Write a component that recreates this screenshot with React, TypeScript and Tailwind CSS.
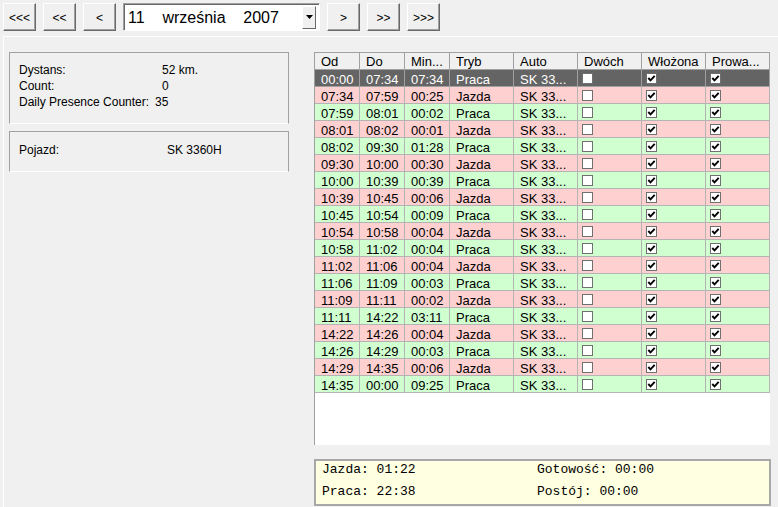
import React from "react";

type Row = { od: string; doo: string; min: string; tryb: string };

const rows: Row[] = [
  { od: "00:00", doo: "07:34", min: "07:34", tryb: "Praca" },
  { od: "07:34", doo: "07:59", min: "00:25", tryb: "Jazda" },
  { od: "07:59", doo: "08:01", min: "00:02", tryb: "Praca" },
  { od: "08:01", doo: "08:02", min: "00:01", tryb: "Jazda" },
  { od: "08:02", doo: "09:30", min: "01:28", tryb: "Praca" },
  { od: "09:30", doo: "10:00", min: "00:30", tryb: "Jazda" },
  { od: "10:00", doo: "10:39", min: "00:39", tryb: "Praca" },
  { od: "10:39", doo: "10:45", min: "00:06", tryb: "Jazda" },
  { od: "10:45", doo: "10:54", min: "00:09", tryb: "Praca" },
  { od: "10:54", doo: "10:58", min: "00:04", tryb: "Jazda" },
  { od: "10:58", doo: "11:02", min: "00:04", tryb: "Praca" },
  { od: "11:02", doo: "11:06", min: "00:04", tryb: "Jazda" },
  { od: "11:06", doo: "11:09", min: "00:03", tryb: "Praca" },
  { od: "11:09", doo: "11:11", min: "00:02", tryb: "Jazda" },
  { od: "11:11", doo: "14:22", min: "03:11", tryb: "Praca" },
  { od: "14:22", doo: "14:26", min: "00:04", tryb: "Jazda" },
  { od: "14:26", doo: "14:29", min: "00:03", tryb: "Praca" },
  { od: "14:29", doo: "14:35", min: "00:06", tryb: "Jazda" },
  { od: "14:35", doo: "00:00", min: "09:25", tryb: "Praca" },
];

function NavButton({ label }: { label: string }) {
  return (
    <button className="w-[33px] h-[28px] pt-[1px] bg-[#f0f0f0] border-t border-l border-white border-b border-r border-b-[#696969] border-r-[#696969] shadow-[inset_-1px_-1px_0_#a0a0a0] text-[12px] text-black flex items-center justify-center">
      {label}
    </button>
  );
}

function CheckBox({ checked }: { checked: boolean }) {
  return (
    <div className="w-[11px] h-[11px] bg-white border border-[#707070] flex items-center justify-center">
      {checked && (
        <svg width="9" height="9" viewBox="0 0 9 9">
          <polyline points="1.3,4 3.5,6.3 7.7,1.8" fill="none" stroke="#000" strokeWidth="1.9" />
        </svg>
      )}
    </div>
  );
}

const headers = [
  { t: "Od", w: "w-[45px]" },
  { t: "Do", w: "w-[45px]" },
  { t: "Min...", w: "w-[45px]" },
  { t: "Tryb", w: "w-[64px]" },
  { t: "Auto", w: "w-[64px]" },
  { t: "Dwóch", w: "w-[64px]" },
  { t: "Włożona", w: "w-[64px]" },
  { t: "Prowa...", w: "w-[64px]" },
];

export default function App() {
  return (
    <div className="w-[778px] h-[507px] bg-[#f0f0f0] overflow-hidden text-black font-['Liberation_Sans',Arial,sans-serif]">
      {/* toolbar */}
      <div className="flex gap-[7px] pt-[3px] pl-[3px] h-[31px]">
        <NavButton label="<<<" />
        <NavButton label="<<" />
        <NavButton label="<" />
        <div className="w-[197px] h-[28px] bg-white border-t border-l border-[#a0a0a0] border-b border-r border-b-white border-r-white shadow-[inset_1px_1px_0_#696969] flex items-center">
          <span className="flex-1 pl-[4px] pt-[1px] text-[16px] leading-none whitespace-pre">11    września    2007</span>
          <div className="w-[14px] h-[23px] mr-[3px] bg-[#f0f0f0] border-t border-l border-white border-b border-r border-b-[#696969] border-r-[#696969] flex items-center justify-center">
            <svg width="7" height="4" viewBox="0 0 7 4">
              <polygon points="0,0 7,0 3.5,4" fill="#000" />
            </svg>
          </div>
        </div>
        <NavButton label=">" />
        <NavButton label=">>" />
        <NavButton label=">>>" />
      </div>

      {/* main panel */}
      <div className="mt-[5px] ml-[3px] h-[471px] border-t border-l border-white flex">
        {/* left column */}
        <div className="w-[310px] pl-[5px] pt-[15px] flex flex-col gap-[7px] text-[12px]">
          <div className="w-[280px] h-[72px] border-t border-l border-r border-[#a0a0a0] border-b border-b-white pt-[9px] pl-[9px] leading-[16px]">
            <div className="flex"><span className="w-[143px]">Dystans:</span><span>52 km.</span></div>
            <div className="flex"><span className="w-[143px]">Count:</span><span>0</span></div>
            <div className="flex"><span className="w-[133px]">Daily Presence Counter:</span><span className="pl-[3px]">35</span></div>
          </div>
          <div className="w-[280px] h-[41px] border-t border-l border-r border-[#a0a0a0] border-b border-b-white pt-[10px] pl-[9px] leading-[16px]">
            <div className="flex"><span className="w-[148px]">Pojazd:</span><span>SK 3360H</span></div>
          </div>
        </div>

        {/* right column */}
        <div className="pt-[15px] flex flex-col">
          <div className="w-[456px] h-[393px] bg-white border-t border-l border-[#a0a0a0] flex flex-col">
            <div className="flex h-[17px] bg-[#f0f0f0] border-b border-[#a0a0a0] text-[13px]">
              {headers.map((h) => (
                <div key={h.t} className={`${h.w} h-full border-r border-[#a0a0a0] pl-[6px] pt-[1px] flex items-center whitespace-nowrap overflow-hidden`}>
                  {h.t}
                </div>
              ))}
            </div>
            {rows.map((r, i) => {
              const sel = i === 0;
              const bg = sel ? "bg-[#646464] text-white" : r.tryb === "Jazda" ? "bg-[#ffd0d0]" : "bg-[#d0ffd0]";
              const line = sel ? "border-[#a0a0a0]" : "border-[#b4b4b4]";
              return (
                <div key={i} className={`flex h-[17px] border-b ${line} ${bg} text-[13px]`}>
                  <div className={`w-[45px] border-r ${line} pl-[6px] pt-[4px] flex items-center`}>{r.od}</div>
                  <div className={`w-[45px] border-r ${line} pl-[6px] pt-[4px] flex items-center`}>{r.doo}</div>
                  <div className={`w-[45px] border-r ${line} pl-[6px] pt-[4px] flex items-center`}>{r.min}</div>
                  <div className={`w-[64px] border-r ${line} pl-[6px] pt-[4px] flex items-center`}>{r.tryb}</div>
                  <div className={`w-[64px] border-r ${line} pl-[6px] pt-[4px] flex items-center whitespace-nowrap`}>SK 33...</div>
                  <div className={`w-[64px] border-r ${line} pl-[4px] pt-[1px] flex items-center`}><CheckBox checked={false} /></div>
                  <div className={`w-[64px] border-r ${line} pl-[4px] pt-[1px] flex items-center`}><CheckBox checked /></div>
                  <div className={`w-[64px] border-r ${line} pl-[4px] pt-[1px] flex items-center`}><CheckBox checked /></div>
                </div>
              );
            })}
          </div>

          <div className="mt-[14px] w-[457px] h-[47px] bg-[#ffffe1] border-2 border-[#a8a8a8] pl-[6px] pt-[1px] flex flex-col gap-[6px] text-[13px] font-['Liberation_Mono','Courier_New',monospace]">
            <div className="flex h-[16px] items-center">
              <span className="w-[215px]">Jazda: 01:22</span>
              <span>Gotowość: 00:00</span>
            </div>
            <div className="flex h-[16px] items-center">
              <span className="w-[215px]">Praca: 22:38</span>
              <span>Postój: 00:00</span>
            </div>
          </div>
        </div>
      </div>
    </div>
  );
}
